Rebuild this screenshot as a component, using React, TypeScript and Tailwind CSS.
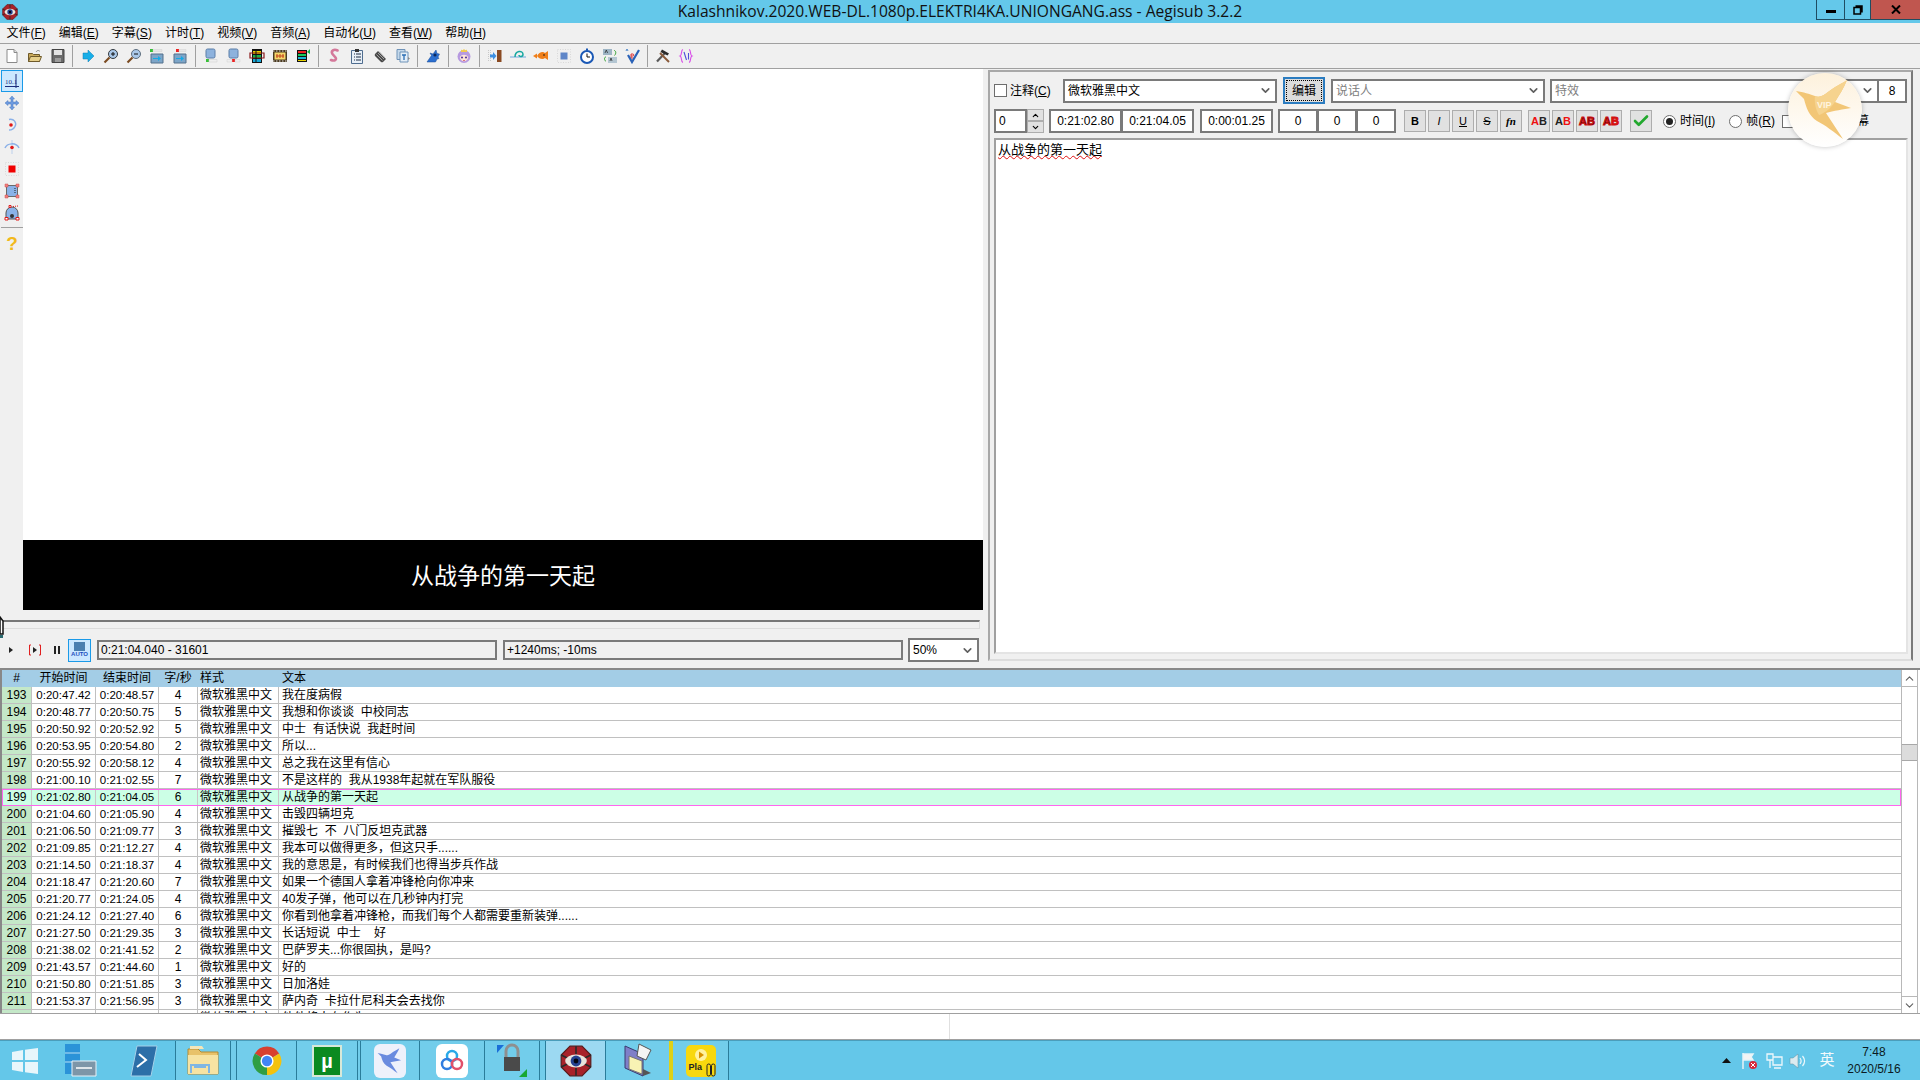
import type { ReactNode } from 'react';
import { ChevronDown, ChevronUp, Check } from 'lucide-react';

const cjk = "font-['Liberation_Sans','Noto_Sans_CJK_SC',sans-serif]";

const menus = ['文件(F)', '编辑(E)', '字幕(S)', '计时(T)', '视频(V)', '音频(A)', '自动化(U)', '查看(W)', '帮助(H)'];

const rows = [
  ['193', '0:20:47.42', '0:20:48.57', '4', '我在度病假'],
  ['194', '0:20:48.77', '0:20:50.75', '5', '我想和你谈谈  中校同志'],
  ['195', '0:20:50.92', '0:20:52.92', '5', '中士  有话快说  我赶时间'],
  ['196', '0:20:53.95', '0:20:54.80', '2', '所以...'],
  ['197', '0:20:55.92', '0:20:58.12', '4', '总之我在这里有信心'],
  ['198', '0:21:00.10', '0:21:02.55', '7', '不是这样的  我从1938年起就在军队服役'],
  ['199', '0:21:02.80', '0:21:04.05', '6', '从战争的第一天起'],
  ['200', '0:21:04.60', '0:21:05.90', '4', '击毁四辆坦克'],
  ['201', '0:21:06.50', '0:21:09.77', '3', '摧毁七  不  八门反坦克武器'],
  ['202', '0:21:09.85', '0:21:12.27', '4', '我本可以做得更多，但这只手......'],
  ['203', '0:21:14.50', '0:21:18.37', '4', '我的意思是，有时候我们也得当步兵作战'],
  ['204', '0:21:18.47', '0:21:20.60', '7', '如果一个德国人拿着冲锋枪向你冲来'],
  ['205', '0:21:20.77', '0:21:24.05', '4', '40发子弹，他可以在几秒钟内打完'],
  ['206', '0:21:24.12', '0:21:27.40', '6', '你看到他拿着冲锋枪，而我们每个人都需要重新装弹......'],
  ['207', '0:21:27.50', '0:21:29.35', '3', '长话短说  中士    好'],
  ['208', '0:21:38.02', '0:21:41.52', '2', '巴萨罗夫...你很固执，是吗?'],
  ['209', '0:21:43.57', '0:21:44.60', '1', '好的'],
  ['210', '0:21:50.80', '0:21:51.85', '3', '日加洛娃'],
  ['211', '0:21:53.37', '0:21:56.95', '3', '萨内奇  卡拉什尼科夫会去找你'],
  ['212', '0:21:57.10', '0:21:59.20', '3', '他他将大有作为'],
];

function Ico({ children, size = 16 }: { children: ReactNode; size?: number }) {
  return (
    <svg width={size} height={size} viewBox="0 0 16 16" className="shrink-0">
      {children}
    </svg>
  );
}

// "文件(F)" -> 文件(<u>F</u>), like a Windows menu mnemonic
function Mnemonic({ text }: { text: string }) {
  const open = text.indexOf('(');
  return (
    <>
      {text.slice(0, open + 1)}
      <u>{text.slice(open + 1, -1)}</u>)
    </>
  );
}

// Aegisub's eye logo, used in the title bar and on the taskbar
function EyeLogo({ size = 16 }: { size?: number }) {
  return (
    <Ico size={size}>
      <path d="M5 .6h6L15.4 5v6L11 15.4H5L.6 11V5z" fill="#a8222a" stroke="#5a1a1a" strokeWidth=".6" />
      <path d="M8 .6v4M8 11.4v4M.6 5l4 2M15.4 5l-4 2M.6 11l4-2M15.4 11l-4-2" stroke="#2a2a2a" strokeWidth=".8" />
      <ellipse cx="8" cy="8" rx="5.4" ry="3.2" fill="#e8e4dc" />
      <circle cx="8" cy="8" r="2.7" fill="#24408f" />
      <circle cx="8" cy="8" r="1.2" fill="#05050f" />
    </Ico>
  );
}

const toolIcons: (ReactNode | null)[] = [
  <><path d="M3 1.5h7l3 3v10H3z" fill="#fff" stroke="#8a8a8a" /><path d="M10 1.5v3h3" fill="#e4e4e4" stroke="#8a8a8a" /></>,
  <><path d="M1.5 13.5v-8h4l1 1h6v7z" fill="#c9a95a" stroke="#6e5a2a" /><path d="M1.5 13.5l2-5h11l-2 5z" fill="#e6cf8a" stroke="#6e5a2a" /><path d="M9 4c1-2 3-2 4-.5" fill="none" stroke="#9a9a9a" /></>,
  <><path d="M2 1.5h12v13H2z" fill="#6b6b6b" stroke="#444" /><path d="M4 2h8v5H4z" fill="#e4e4e4" /><path d="M5 10h6v4H5z" fill="#9c9c9c" /></>,
  null,
  <path d="M3 5h5V2l6 6-6 6v-3H3z" fill="#17aee8" stroke="#0d7fb5" strokeWidth=".5" />,
  <><circle cx="10" cy="6" r="4.5" fill="#a9c7e8" stroke="#33393f" /><path d="M6.5 9.5L1.5 14.5" stroke="#7a4a20" strokeWidth="2.2" /><path d="M8 6h4M10 4v4" stroke="#111" /></>,
  <><circle cx="10" cy="6" r="4.5" fill="#a9c7e8" stroke="#5d6d7d" /><path d="M6.5 9.5L1.5 14.5" stroke="#7a4a20" strokeWidth="2.2" /><path d="M8 6h4" stroke="#111" /></>,
  <><path d="M1 1h3v3H1z" fill="#38c038" /><path d="M4 1.5h9v2H4z" fill="#e6e6e6" stroke="#ccc" strokeWidth=".4" /><path d="M2 6h12v9H2z" fill="#7da5c8" stroke="#55718c" /><path d="M4 10h5V8l3 2.5L9 13v-2H4z" fill="#14a9e6" /></>,
  <><path d="M4 1h3v3H4z" fill="#e22" /><path d="M7 1.5h7v2H7z" fill="#e6e6e6" stroke="#ccc" strokeWidth=".4" /><path d="M2 6h12v9H2z" fill="#7da5c8" stroke="#55718c" /><path d="M4 10h5V8l3 2.5L9 13v-2H4z" fill="#14a9e6" /></>,
  null,
  <><rect x="3" y="1" width="9" height="9" rx="1.5" fill="#8db2dd" stroke="#5d7fa8" /><path d="M3 11h3v3H3z" fill="#38c038" /><path d="M6 11.5h8v2.5H6z" fill="#eee" stroke="#ccc" strokeWidth=".5" /></>,
  <><rect x="3" y="1" width="9" height="9" rx="1.5" fill="#8db2dd" stroke="#5d7fa8" /><path d="M6 11h3v3H6z" fill="#e22" /><path d="M1 11.5h5v2.5H1zM9 11.5h5v2.5H9z" fill="#eee" stroke="#ccc" strokeWidth=".4" /></>,
  <><path d="M3 1h10v14H3z" fill="#111" /><path d="M4 3h8v3H4z" fill="#e6d100" /><path d="M4 7h8v3H4z" fill="#1ab04a" /><path d="M4 11h8v3H4z" fill="#18a8d8" /><path d="M1 5h14v5H1z" fill="none" stroke="#8b1a1a" strokeWidth="1.2" /><path d="M7 1v14" stroke="#111" /></>,
  <><path d="M1 2h14v12H1z" fill="#4a3a20" /><path d="M1 3h14M1 13h14" stroke="#ddd" strokeDasharray="1.5 1.5" /><path d="M2.5 4.5h11v7h-11z" fill="#f5d86a" /><path d="M5 6v4M8 6v4M11 6v4M4 8h8" stroke="#c2401d" /></>,
  <><path d="M2 2h10v12H2z" fill="#111" /><path d="M3 3h8v2H3z" fill="#e22" /><path d="M3 6h8v2H3z" fill="#18c858" /><path d="M3 9h8v2H3z" fill="#18b8d8" /><path d="M3 12h8v1H3z" fill="#e6d100" /><path d="M12 4l3-3v5z" fill="#1ab04a" /></>,
  null,
  <path d="M11.5 2.5C8 .5 4.5 3 6.5 6l3 3.5c1.5 2-1 4-4.5 2.5" fill="none" stroke="#d4789a" strokeWidth="2.6" strokeLinecap="round" />,
  <><path d="M2.5 2.5h11v13h-11z" fill="#e8f0f8" stroke="#4f6d8f" /><path d="M6 1h4v3H6z" fill="#333" /><path d="M5 6h1M5 9h1M5 12h1M7 6h5M7 9h5M7 12h5" stroke="#1c2c44" strokeWidth="1.2" /></>,
  <><path d="M3 6l3-3 8 8-3 3a2 2 0 0 1-2 0L3 8a2 2 0 0 1 0-2z" fill="#4a4a4a" /><path d="M4.500 6.500l6 6M6 5l6 6M7.500 3.500l5 5.500" stroke="#c4c4c4" strokeWidth=".7" /></>,
  <><path d="M2 1.5h8v10H2z" fill="#c4d8ea" stroke="#6f93b8" /><path d="M5 4h8v10H5z" fill="#e4eef7" stroke="#6f93b8" /><path d="M7 7h4M9 7v5" stroke="#2b6fb5" strokeWidth="1.3" /><path d="M13 9l2 1.5-2 1.5z" fill="#888" /></>,
  null,
  <><path d="M2 14l4.5-6.5L5 5l3 1 3-4 1 3.5 2.5.5-1.5 3 1 1.5-2 .5-1.5 3z" fill="#2b6fd0" stroke="#174a95" strokeWidth=".5" /><circle cx="10" cy="7" r="1.6" fill="#0c2a60" /></>,
  null,
  <><circle cx="8" cy="8.5" r="6.5" fill="#b79ae0" /><path d="M3.8 9a4.2 4.2 0 0 0 8.4 0 5 5 0 0 0-8.4 0z" fill="#fce4d8" /><path d="M5 1.5l1.5 1L8 1l1.5 1.5L11 1.500v2.500H5z" fill="#f3cc4c" /><circle cx="6" cy="9.500" r="1.100" fill="#5a3ca0" /><circle cx="10" cy="9.500" r="1.100" fill="#5a3ca0" /><path d="M7.200 12.500h1.600" stroke="#d45a6a" /></>,
  null,
  <><path d="M1.500 2v12M3.500 2v12" stroke="#c8c8c8" strokeDasharray="1 1" /><path d="M10 2h4.500v12H10z" fill="#8a4a22" /><path d="M3 6.500h3V4l3.500 4L6 12V9.500H3z" fill="#3f8fe0" /></>,
  <><path d="M0 9h16" stroke="#6fa8dc" /><path d="M5 9c0-7 8-7 8-2.500 0 2.500-4 2.500-4 .5" fill="none" stroke="#15a7a0" strokeWidth="1.500" /></>,
  <><path d="M4 8c2-4 6-5 8-3l3-2v9l-3-2c-2 2-6 1-8-2z" fill="#ef7f1a" /><path d="M0 8l4-2.500v5z" fill="#ef7f1a" /><circle cx="11" cy="7" r=".8" fill="#111" /></>,
  <><path d="M1.500 1.500h13v13h-13z" fill="none" stroke="#d8d8d8" strokeDasharray="1 1.500" /><path d="M4.500 4.500h7v7h-7z" fill="#5f86c8" /></>,
  <><circle cx="8" cy="9" r="6" fill="#fff" stroke="#1a58b5" strokeWidth="2" /><path d="M7 .5h2v2H7z" fill="#1a58b5" /><path d="M8 5.500V9h3" fill="none" stroke="#111" /></>,
  <><path d="M1 1h9v6H1z" fill="#9db4c4" /><path d="M6 9h9v6H6z" fill="#b4c6d2" /><path d="M12 2.500c2 0 2.500 3 .5 5M4 9c-2 0-2 3 0 4.500" fill="none" stroke="#36a336" /><path d="M3 5l1.300-3 1.300 3M8 13l1-3 1 3" fill="none" stroke="#222" strokeWidth=".7" /></>,
  <><path d="M1 3l1-2 1 2" fill="none" stroke="#2a6fc0" strokeWidth=".8" /><path d="M6 8h2c1 0 1-2 0-2H6v4h2.500" fill="none" stroke="#d22" strokeWidth=".9" /><path d="M3 7l4 7 7-12" fill="none" stroke="#2a62b8" strokeWidth="2.200" /></>,
  null,
  <><path d="M2 13.500L10 5" stroke="#5a5a5a" strokeWidth="2.200" /><path d="M7 1.500l7 4-1.500 2-7-3.500z" fill="#2a2a2a" /><path d="M5 5l9 9" stroke="#8a5a3a" strokeWidth="2" /></>,
  <><path d="M5 1.500C2.500 2 4.500 7 2 8c2.500 1 .5 6 3 6.500M11 1.500C13.500 2 11.500 7 14 8c-2.500 1-.5 6-3 6.500" fill="none" stroke="#d84ae8" strokeWidth="1.100" /><path d="M6 4l2.500 8M10.500 5v6.500" stroke="#4f4fd8" strokeWidth="1.100" /></>,
];

const leftTools: ReactNode[] = [
  <><path d="M1 13.500h14M12 1v14" stroke="#1c2c7c" /><text x="1" y="11" fontSize="7" fontFamily="Liberation Serif, serif" fill="#1c2c7c">10.1</text></>,
  <path d="M8 1l2.500 3H9v3h3V5.500L15 8l-3 2.500V9H9v3h1.500L8 15l-2.500-3H7V9H4v1.500L1 8l3-2.500V7h3V4H5.500z" fill="#6d9be0" stroke="#4c78bd" strokeWidth=".5" />,
  <><path d="M5 2.500c5-1 8 3 6 7-1 2-3 3.500-6 3.500" fill="none" stroke="#8ab0e8" strokeWidth="1.500" /><circle cx="7" cy="8" r="1.800" fill="#e01818" /></>,
  <><path d="M1 9c2-5 11-6 14 0" fill="none" stroke="#8ab0e8" strokeWidth="1.500" /><path d="M8 1v14" stroke="#8ab0e8" strokeOpacity=".5" /><circle cx="8" cy="8.500" r="1.800" fill="#e01818" /></>,
  <><path d="M1.500 1.500h13v13h-13z" fill="none" stroke="#d8d8d8" strokeDasharray="1 1.500" /><path d="M4.500 4.500h7v7h-7z" fill="#f00000" /></>,
  <><path d="M2.500 2.500h11v11h-11z" fill="#8ab2e8" stroke="#6a6a6a" /><path d="M1 1h3v3H1zM12 1h3v3h-3zM1 12h3v3H1zM12 12h3v3h-3z" fill="#f08080" stroke="#d05050" strokeWidth=".5" /><path d="M11 5v6" stroke="#222" strokeDasharray="1 1" /></>,
  <><path d="M2 14V8a6 6 0 0 1 12 0v6z" fill="#8ab2e8" stroke="#555" /><path d="M1 12.500h3v2.500H1zM12 12.500h3v2.500h-3zM5 .500h2v2H5z" fill="#fff" stroke="#e01818" /><path d="M9 1.500l5-.500" stroke="#e01818" strokeDasharray="1 1" /><circle cx="8" cy="11" r="2" fill="#333" /></>,
];

function Sep() {
  return <div className="w-px h-[22px] mx-[3.35px] bg-[#a0a0a0]" />;
}

function Combo({ label, className, muted }: { label: string; className: string; muted?: boolean }) {
  return (
    <div className={`flex items-center justify-between h-6 pl-[3px] pr-[3px] bg-white border-2 border-[#7a7a7a] ${className} ${muted ? 'text-[#808080]' : 'text-black'}`}>
      <span>{label}</span>
      <ChevronDown size={13} strokeWidth={3} className="text-[#606060]" />
    </div>
  );
}

function Box({ children, className }: { children: ReactNode; className: string }) {
  return (
    <div className={`flex items-center justify-center h-6 bg-white border-2 border-[#7a7a7a] ${className}`}>
      {children}
    </div>
  );
}

function StyleBtn({ children }: { children: ReactNode }) {
  return (
    <div className="flex items-center justify-center w-[22px] h-[22px] bg-[#e1e1e1] border border-[#adadad] text-[11px]">
      {children}
    </div>
  );
}

function ColorBtn({ a, b, heavy }: { a: string; b: string; heavy?: boolean }) {
  return (
    <StyleBtn>
      <span className={heavy ? '[-webkit-text-stroke:1px_#d01010] font-bold text-black' : 'font-bold'}>
        <span className={a}>A</span>
        <span className={b}>B</span>
      </span>
    </StyleBtn>
  );
}

function Radio({ on, label }: { on?: boolean; label: string }) {
  return (
    <div className="flex items-center gap-1">
      <div className="flex items-center justify-center w-[13px] h-[13px] rounded-full bg-white border border-[#6d6d6d]">
        {on && <div className="w-[7px] h-[7px] rounded-full bg-[#222]" />}
      </div>
      <span><Mnemonic text={label} /></span>
    </div>
  );
}

function EditPanel() {
  return (
    <div className="relative flex flex-col w-[925px] h-[591px] mt-px ml-[5px] pl-[4px] pr-[3px] bg-[#f0f0f0] border-2 border-[#a8a8a8] border-r-[#7a7a7a] border-b-[#dcdcdc]">
      <div className="flex items-center h-[27px] mt-[5px]">
        <div className="w-[13px] h-[13px] bg-white border border-[#6d6d6d] mr-[3px]" />
        <span className="w-[53px]"><Mnemonic text="注释(C)" /></span>
        <Combo label="微软雅黑中文" className="w-[214px]" />
        <div className="flex items-center justify-center w-[42px] h-[27px] mx-[6px] bg-[#dcdcdc] border-2 border-[#2b7cc0] outline-1 outline-dotted outline-offset-[-4px] outline-black">编辑</div>
        <Combo label="说话人" className="w-[214px] mr-[5px]" muted />
        <Combo label="特效" className="w-[329px]" muted />
        <Box className="w-[30px] -ml-[2px]">8</Box>
      </div>
      <div className="flex items-center h-6 mt-[5px]">
        <Box className="w-[33px] !justify-start pl-[3px]">0</Box>
        <div className="flex flex-col w-[17px] h-6 mr-[5px]">
          <div className="flex-1 flex items-center justify-center bg-[#e1e1e1] border border-[#adadad]"><ChevronUp size={9} strokeWidth={3} /></div>
          <div className="flex-1 flex items-center justify-center bg-[#e1e1e1] border border-[#adadad]"><ChevronDown size={9} strokeWidth={3} /></div>
        </div>
        <Box className="w-[73px]">0:21:02.80</Box>
        <Box className="w-[73px] -ml-px mr-[6px]">0:21:04.05</Box>
        <Box className="w-[73px] mr-[5px]">0:00:01.25</Box>
        <Box className="w-[40px]">0</Box>
        <Box className="w-[40px] -ml-px">0</Box>
        <Box className="w-[40px] -ml-px mr-[8px]">0</Box>
        <div className="flex gap-[2px]">
          <StyleBtn><b>B</b></StyleBtn>
          <StyleBtn><i>I</i></StyleBtn>
          <StyleBtn><u>U</u></StyleBtn>
          <StyleBtn><s>S</s></StyleBtn>
          <StyleBtn><i className="font-['Liberation_Serif',serif] font-bold">fn</i></StyleBtn>
        </div>
        <div className="flex gap-[2px] ml-[6px]">
          <ColorBtn a="text-[#ee1111]" b="text-[#222]" />
          <ColorBtn a="text-[#222]" b="text-[#ee1111]" />
          <ColorBtn a="text-black" b="text-black" heavy />
          <ColorBtn a="text-black" b="text-[#ee1111]" heavy />
        </div>
        <div className="flex items-center justify-center w-[22px] h-[22px] ml-[8px] mr-[11px] bg-[#e1e1e1] border border-[#adadad]">
          <Check size={18} strokeWidth={3.5} className="text-[#22a82e]" />
        </div>
        <Radio on label="时间(I)" />
        <div className="w-[14px]" />
        <Radio label="帧(R)" />
        <div className="w-[7px]" />
        <div className="w-[13px] h-[13px] bg-white border border-[#6d6d6d] mr-[2px]" />
        <span>显示原始字幕</span>
      </div>
      <div className="flex-1 mt-[5px] mb-[5px] px-[2px] py-[1px] bg-white border-2 border-[#a0a0a0] border-r-[#e4e4e4] border-b-[#e4e4e4] text-[13px] leading-[17px]">
        <span className="underline decoration-wavy decoration-[#e01010] decoration-1">从战争的第一天起</span>
      </div>
      {/* floating Xunlei VIP bubble sits over the form */}
      <div className="absolute left-[798px] top-[1px] flex items-center justify-center w-[74px] h-[74px] rounded-full bg-gradient-to-b from-[#fdf1dc] to-[#ffffff] shadow-[0_0_5px_rgba(0,0,0,0.25)]">
        <svg width="66" height="66" viewBox="0 0 66 66">
          <path d="M4 14c8 1 13 3 19 5 5 2 9-1 13-4 6-5 15-9 19-12-3 8-8 15-12 22l16 6c-7 1-18 3-25 5l17 26c-9-7-18-14-26-18-8-5-11-14-13-22-3-3-6-6-8-8z" fill="#f2c676" />
          <path d="M23 19c5 2 9-1 13-4 6-5 15-9 19-12-3 8-8 15-12 22-5 7-10 11-16 13-3-5-5-12-4-19z" fill="#f6d38e" />
          <text x="25" y="31" fontSize="9" fontWeight="700" fontFamily="Liberation Sans, sans-serif" fill="#fff4df">VIP</text>
        </svg>
      </div>
    </div>
  );
}

function VideoPanel() {
  return (
    <div className="flex flex-col w-[983px]">
      <div className="flex h-[541px]">
        <div className="flex flex-col w-[23px] pl-px pt-px">
          {leftTools.map((icon, i) => (
            <div key={i} className={`flex items-center justify-center w-[22px] h-[22px] ${i === 0 ? 'bg-[#cce8ff] border border-[#1a9ae8]' : ''}`}>
              <Ico>{icon}</Ico>
            </div>
          ))}
          <div className="h-px w-[22px] bg-[#a0a0a0] my-[3px]" />
          <div className="flex items-center justify-center h-[26px] w-[22px] text-[#f2b91c] text-[19px] font-bold">?</div>
        </div>
        <div className="flex-1 flex flex-col">
          <div className="flex-1 bg-white" />
          <div className="flex items-center justify-center h-[70px] pt-[2px] bg-black text-white text-[23px]">从战争的第一天起</div>
        </div>
      </div>
      <div className="relative h-[28px]">
        <div className="absolute left-0 right-[3px] top-[10px] h-[9px] border-t-2 border-[#777] border-r border-r-[#dcdcdc] border-b border-b-[#dcdcdc]" />
        <svg width="8" height="24" viewBox="0 0 8 24" className="absolute left-0 top-[4px]">
          <path d="M0 3l3 4v13H0z" fill="#fff" stroke="#111" strokeWidth="1.500" />
          <path d="M0 21h3v3H0z" fill="#2a6a70" />
        </svg>
      </div>
      <div className="flex items-center h-[24px]">
        <svg width="64" height="16" viewBox="0 0 64 16" className="shrink-0 ml-[7px] mr-[-1px]">
          <path d="M2 5l4 3-4 3z" fill="#222" />
          <path d="M24 3h-1.500v10H24M32 3h1.500v10H32" fill="none" stroke="#e02020" />
          <path d="M26 5l4 3-4 3z" fill="#222" />
          <path d="M47 4h2v8h-2zM51 4h2v8h-2z" fill="#222" />
        </svg>
        <div className="flex flex-col items-center justify-center w-[23px] h-[23px] ml-[-2px] bg-[#cce8ff] border border-[#1a9ae8]">
          <div className="w-[11px] h-[9px] bg-[#4a7fb0]" />
          <span className="text-[6px] leading-[7px] font-bold text-[#1a50c0]">AUTO</span>
        </div>
        <div className="flex items-center w-[400px] h-[20px] ml-[6px] pl-[2px] border-2 border-[#7a7a7a]">0:21:04.040 - 31601</div>
        <div className="flex items-center w-[400px] h-[20px] ml-[6px] pl-[2px] border-2 border-[#7a7a7a]">+1240ms; -10ms</div>
        <Combo label="50%" className="w-[71px] ml-[5px]" />
      </div>
    </div>
  );
}

function GridRow({ cells, active, header }: { cells: string[]; active?: boolean; header?: boolean }) {
  const line = header ? 'border-[#a3cde6]' : active ? 'border-[#c8c8c8]' : 'border-[#c0c0c0]';
  const [num, start, end, cps, text] = cells;
  return (
    <div className={`flex shrink-0 h-[17px] leading-[17px] ${header ? 'bg-[#a3cde6]' : active ? 'bg-[#ccffe6] outline-1 -outline-offset-1 outline-[#ff66ee]' : 'bg-white border-b border-[#c0c0c0]'}`}>
      <div className={`w-[29px] text-center ${header ? '' : active ? 'bg-[#ccffe6]' : 'bg-[#c4e8c8]'}`}>{num}</div>
      <div className={`w-[64px] text-center text-[11.5px] border-l ${line} ${header ? 'text-[12px]' : ''}`}>{start}</div>
      <div className={`w-[63px] text-center text-[11.5px] border-l ${line} ${header ? 'text-[12px]' : ''}`}>{end}</div>
      <div className={`w-[39px] text-center border-l ${line}`}>{cps}</div>
      <div className={`w-[81px] pl-[2px] border-l ${line}`}>{header ? '样式' : '微软雅黑中文'}</div>
      <div className={`flex-1 pl-[3px] whitespace-pre border-l ${line}`}>{text}</div>
    </div>
  );
}

function SubsGrid() {
  return (
    <div className="flex h-[345px] bg-white border-t-2 border-[#888] border-l-2 border-l-[#888]">
      <div className="flex-1 flex flex-col overflow-hidden">
        <GridRow header cells={['#', '开始时间', '结束时间', '字/秒', '文本']} />
        {rows.map((r) => (
          <GridRow key={r[0]} cells={r} active={r[0] === '199'} />
        ))}
      </div>
      <div className="flex flex-col w-[17px] mr-[2px] bg-white border-x border-[#b8b8b8]">
        <div className="flex items-center justify-center h-[17px] border-b border-[#b8b8b8]">
          <ChevronUp size={13} strokeWidth={2} className="text-[#606060]" />
        </div>
        <div className="h-[57px]" />
        <div className="h-[17px] bg-[#dcdcdc] border-y border-[#a8a8a8]" />
        <div className="flex-1" />
        <div className="flex items-center justify-center h-[17px] border-t border-[#b8b8b8]">
          <ChevronDown size={13} strokeWidth={2} className="text-[#606060]" />
        </div>
      </div>
    </div>
  );
}

function TaskItem({ w, children, tone, strip }: { w: string; children: ReactNode; tone?: string; strip?: string }) {
  return (
    <div className={`flex items-center h-full border-l border-[#2a7c9a] ${tone ?? 'bg-[#72cdeb]'}`}>
      <div className={`flex items-center justify-center ${w}`}>{children}</div>
      {strip && <div className={`${strip} h-full border-l border-[#2a7c9a]`} />}
    </div>
  );
}

function Taskbar() {
  return (
    <div className="flex items-stretch h-[40px] bg-[#64c7e9] border-t border-[#4a9dbb]">
      <div className="flex items-center justify-center w-[50px]">
        <svg width="28" height="28" viewBox="0 0 28 28">
          <path d="M1 5l11-2v10H1zM14 2.700L27 1v12H14zM1 15h11v10L1 23zM14 15h13v12l-13-1.700z" fill="#e8f6fb" />
        </svg>
      </div>
      <div className="flex items-center justify-center w-[62px]">
        <svg width="32" height="34" viewBox="0 0 32 34">
          <path d="M0 0h15v30H0z" fill="#2b93d8" />
          <path d="M0 9h15M0 18h15" stroke="#b8e0f4" />
          <path d="M7 17h24v15H7z" fill="#7d96a8" stroke="#e8f2f8" />
          <path d="M11 24h16" stroke="#fff" strokeWidth="1.500" />
        </svg>
      </div>
      <div className="flex items-center justify-center w-[63px]">
        <svg width="28" height="32" viewBox="0 0 28 32">
          <path d="M7 1h20l-6 30H1z" fill="#2c6fa8" stroke="#a5d0e8" />
          <path d="M9 9l7 6-9 7" fill="none" stroke="#fff" strokeWidth="2" />
        </svg>
      </div>
      <TaskItem w="w-[54px]" strip="w-[6px]">
        <svg width="32" height="36" viewBox="0 0 32 36">
          <path d="M1 6h10l3 3h17v22H1z" fill="#e8c26a" stroke="#b58a30" />
          <path d="M3 3h12l2 3H3z" fill="#f4e6b8" />
          <path d="M1 12h30v19H1z" fill="#f7e3a2" />
          <path d="M4 30v-8h18v8M7 24h12" fill="none" stroke="#7fb6e4" strokeWidth="2" />
        </svg>
      </TaskItem>
      <TaskItem w="w-[59px]">
        <svg width="30" height="30" viewBox="0 0 32 32">
          <path d="M16 16L3 8a15 15 0 0 1 26 0z" fill="#d8402f" />
          <path d="M16 16l13-8a15 15 0 0 1-13 23z" fill="#f4c20d" />
          <path d="M16 16v15A15 15 0 0 1 3 8z" fill="#2f9e44" />
          <circle cx="16" cy="16" r="7" fill="#fff" />
          <circle cx="16" cy="16" r="5.500" fill="#4285f4" />
        </svg>
      </TaskItem>
      <TaskItem w="w-[60px]" strip="w-[3px]">
        <div className="flex items-center justify-center w-[30px] h-[32px] bg-[#0b8a20] border-2 border-[#d8e8d8] text-white font-bold text-[20px] font-['Liberation_Sans',sans-serif]">µ</div>
      </TaskItem>
      <TaskItem w="w-[58px]">
        <div className="flex items-center justify-center w-[32px] h-[34px] rounded-[6px] bg-[#eef1fb]">
          <svg width="28" height="30" viewBox="0 0 66 66">
            <path d="M4 14c8 1 13 3 19 5 5 2 9-1 13-4 6-5 15-9 19-12-3 8-8 15-12 22l16 6c-7 1-18 3-25 5l17 26c-9-7-18-14-26-18-8-5-11-14-13-22-3-3-6-6-8-8z" fill="#6a8bdf" />
          </svg>
        </div>
      </TaskItem>
      <TaskItem w="w-[64px]">
        <div className="flex items-center justify-center w-[32px] h-[34px] rounded-[6px] bg-white">
          <svg width="24" height="24" viewBox="0 0 24 24">
            <circle cx="12" cy="7" r="5" fill="none" stroke="#29a9e8" strokeWidth="2.500" />
            <circle cx="7" cy="15" r="5" fill="none" stroke="#2f7de0" strokeWidth="2.500" />
            <circle cx="17" cy="15" r="5" fill="none" stroke="#e0506a" strokeWidth="2.500" />
          </svg>
        </div>
      </TaskItem>
      <TaskItem w="w-[54px]" strip="w-[6px]">
        <svg width="32" height="36" viewBox="0 0 32 36">
          <path d="M10 14V8a6 6 0 0 1 12 0v6" fill="none" stroke="#8f8f8f" strokeWidth="3" />
          <path d="M8 14h16v14H8z" fill="#4a4a4a" />
          <path d="M1 2l7 0-7 8z" fill="#1a6fd8" />
          <path d="M31 34h-8l8-8z" fill="#16a832" />
        </svg>
      </TaskItem>
      <TaskItem w="w-[59px]" tone="bg-[#9cd9f2]">
        <EyeLogo size={32} />
      </TaskItem>
      <TaskItem w="w-[63px]">
        <svg width="32" height="36" viewBox="0 0 32 36">
          <path d="M3 3l18 8v22L3 25z" fill="#7f7fc8" stroke="#3a3a70" />
          <path d="M17 1l12 6-5 10-9-4z" fill="#f4f4f4" stroke="#555" />
          <path d="M7 13l13 5v13L7 26z" fill="#f8f3b4" stroke="#777" />
          <path d="M21 26l8 4-8 3z" fill="#555" />
        </svg>
      </TaskItem>
      <div className="w-[4px] bg-[#dfd116]" />
      <div className="flex items-center justify-center w-[56px] bg-[#72cdeb] border-r border-[#2a7c9a]">
        <div className="relative flex flex-col items-center w-[30px] h-[32px] rounded-[5px] bg-[#f8d80e] text-[9px] font-bold text-[#222]">
          <svg width="14" height="14" viewBox="0 0 14 14" className="mt-[3px]">
            <circle cx="7" cy="7" r="6" fill="#fff2a0" />
            <path d="M5 3.500l5 3.500-5 3.500z" fill="#d89000" />
          </svg>
          <span className="leading-[11px] self-start pl-[3px]">Pla</span>
          <svg width="10" height="14" viewBox="0 0 10 14" className="absolute right-0 bottom-0">
            <rect x="1" y="1" width="3.500" height="12" rx="1.700" fill="#f8d80e" stroke="#222" />
            <rect x="5.500" y="1" width="3.500" height="12" rx="1.700" fill="#f8d80e" stroke="#222" />
          </svg>
        </div>
      </div>
      <div className="flex-1" />
      <div className="flex items-center pr-[13px] text-[#0b1a22]">
        <svg width="9" height="5" viewBox="0 0 9 5"><path d="M0 5l4.500-5L9 5z" fill="#111" /></svg>
        <svg width="18" height="18" viewBox="0 0 18 18" className="ml-[10px]">
          <path d="M2 1v16M2 2h10l-2 3 2 3H2" fill="#f4f4f4" stroke="#e8f4f8" strokeWidth="1.500" />
          <circle cx="12" cy="13" r="4" fill="#d8283a" />
          <path d="M10 11l4 4M14 11l-4 4" stroke="#fff" />
        </svg>
        <svg width="18" height="18" viewBox="0 0 18 18" className="ml-[7px]">
          <path d="M1 2h6v6H1zM7 5h9v8H7z" fill="none" stroke="#eef8fb" strokeWidth="1.300" />
          <path d="M4 8v8M8 16h7" stroke="#eef8fb" strokeWidth="1.300" />
        </svg>
        <svg width="18" height="18" viewBox="0 0 18 18" className="ml-[5px]">
          <path d="M1 6h3l5-4v14l-5-4H1z" fill="#dcebf0" stroke="#5d8fa3" strokeWidth=".5" />
          <path d="M11 6c1.500 2 1.500 4 0 6M13.500 4c2.500 3 2.500 7 0 10" fill="none" stroke="#eef8fb" strokeWidth="1.200" />
        </svg>
        <span className="ml-[10px] w-[20px] text-center text-[15px] text-[#f2fafc]">英</span>
        <div className="flex flex-col items-center w-[66px] text-[12px] leading-[17px] ml-[4px]">
          <span>7:48</span>
          <span>2020/5/16</span>
        </div>
      </div>
    </div>
  );
}

export default function App() {
  return (
    <div className={`flex flex-col w-[1920px] h-[1080px] overflow-hidden bg-[#f0f0f0] text-[12px] text-black ${cjk}`}>
      <div className="relative flex items-center h-[23px] bg-[#64c8ea]">
        <div className="w-[20px] pl-[2px]"><EyeLogo size={16} /></div>
        <div className="flex-1 text-center text-[15.6px] font-['Open_Sans',sans-serif] text-[#111] mr-[20px]">
          Kalashnikov.2020.WEB-DL.1080p.ELEKTRI4KA.UNIONGANG.ass - Aegisub 3.2.2
        </div>
        <div className="absolute right-0 top-0 flex h-[20px] border-b border-l border-[#1f4d62]">
          <div className="flex items-center justify-center w-[28px] border-r border-[#1f4d62]">
            <div className="w-[10px] h-[3px] mt-[3px] bg-black" />
          </div>
          <div className="flex items-center justify-center w-[26px] border-r border-[#1f4d62]">
            <svg width="10" height="10" viewBox="0 0 10 10">
              <path d="M2.500 1h6.500v6.500M1 2.500h6.500v6.500H1z" fill="none" stroke="#000" strokeWidth="1.500" />
            </svg>
          </div>
          <div className="flex items-center justify-center w-[49px] bg-[#c0564f]">
            <svg width="10" height="9" viewBox="0 0 10 9">
              <path d="M1 .5l8 8M9 .5l-8 8" stroke="#000" strokeWidth="2" />
            </svg>
          </div>
        </div>
      </div>

      <div className="flex items-center h-[20px] pl-0 bg-[#f0f0f0]">
        {menus.map((m) => (
          <span key={m} className="px-[6.5px]"><Mnemonic text={m} /></span>
        ))}
      </div>

      <div className="flex items-center h-[26px] border-y border-[#a0a0a0] bg-[#f0f0f0]">
        {toolIcons.map((icon, i) =>
          icon === null ? (
            <Sep key={i} />
          ) : (
            <div key={i} className="flex items-center justify-center w-[23px]">
              <Ico>{icon}</Ico>
            </div>
          ),
        )}
      </div>

      <div className="flex h-[599px]">
        <VideoPanel />
        <EditPanel />
      </div>

      <SubsGrid />

      <div className="flex flex-1 bg-white border-y border-[#a0a0a0]">
        <div className="w-[950px] border-r border-[#e0e0e0]" />
      </div>

      <Taskbar />
    </div>
  );
}
